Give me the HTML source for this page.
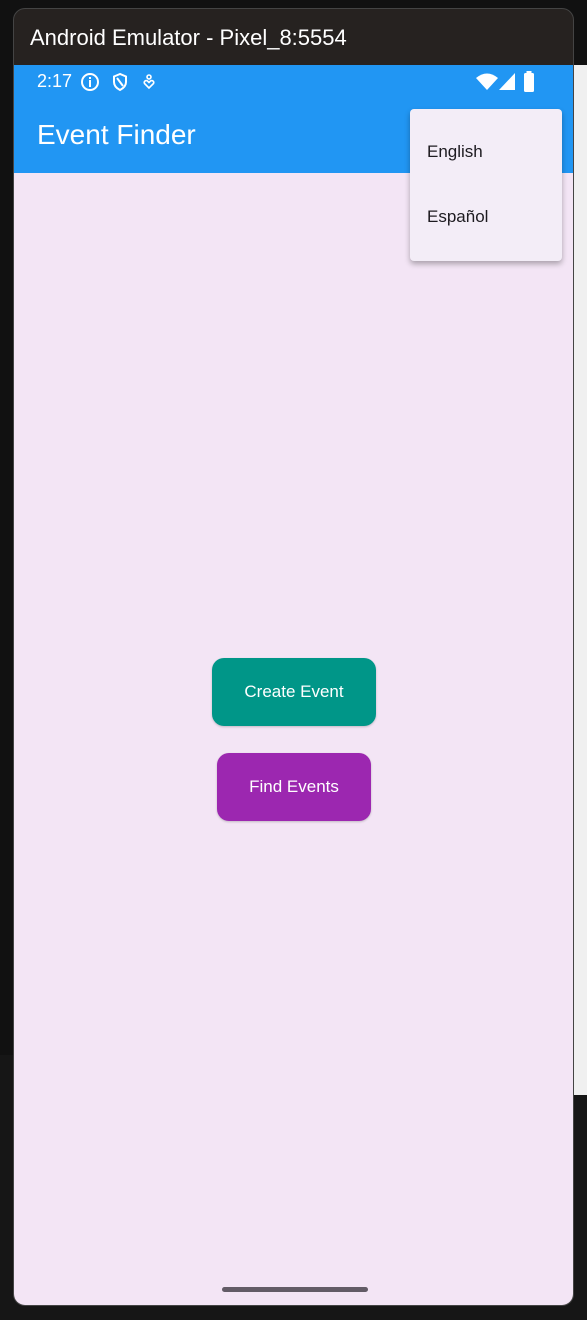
<!DOCTYPE html>
<html><head><style>
*{margin:0;padding:0;box-sizing:border-box}
body{width:587px;height:1320px;background:#111;position:relative;overflow:hidden;font-family:"Liberation Sans",sans-serif}
.lower{position:absolute;left:0;top:1055px;width:587px;height:265px;background:#161616}
.right{position:absolute;left:574px;top:65px;width:13px;height:1030px;background:#f0f0f0}
.win{position:absolute;left:13px;top:8px;width:561px;height:1298px;border-radius:12px;background:#262220;overflow:hidden;border:1px solid #444}
.title{position:absolute;left:16px;top:16px;color:#fff;font-size:22px}
.bar{position:absolute;left:0;top:56px;width:561px;height:108px;background:#2196F3}
.content{position:absolute;left:0;top:164px;width:561px;height:1134px;background:#F3E5F5}
.sb{position:absolute;top:62px;color:#fff;font-size:18px}
.app{position:absolute;left:23px;top:110px;color:#fff;font-size:28px}
.btn{position:absolute;color:#fff;font-size:17px;display:flex;align-items:center;justify-content:center;border-radius:12px;box-shadow:0 1px 2px rgba(0,0,0,.2)}
.menu{position:absolute;left:396px;top:100px;width:152px;height:152px;background:#F3EDF7;border-radius:4px;box-shadow:0 3px 6px rgba(0,0,0,.3)}
.mi{position:absolute;left:17px;font-size:17px;color:#1d1b20}
.home{position:absolute;left:208px;top:1278px;width:146px;height:5px;border-radius:3px;background:#625b66}
</style></head><body>
<div class="lower"></div>
<div class="right"></div>
<div class="win">
<div class="title">Android Emulator - Pixel_8:5554</div>
<div class="bar"></div>
<div class="content"></div>
<div class="sb" style="left:23px">2:17</div>
<svg style="position:absolute;left:66px;top:63px" width="20" height="20" viewBox="0 0 20 20"><circle cx="10" cy="10" r="8" fill="none" stroke="#fff" stroke-width="2"/><rect x="9" y="8" width="2" height="7" fill="#fff"/><rect x="9" y="5" width="2" height="2" fill="#fff"/></svg>
<svg style="position:absolute;left:97px;top:63px" width="18" height="20" viewBox="0 0 18 20"><path d="M9 2L3 4.5V10c0 4 3 6.5 6 8 3-1.5 6-4 6-8V4.5z M6 6l6 8" fill="none" stroke="#fff" stroke-width="2"/></svg>
<svg style="position:absolute;left:128px;top:65px" width="14" height="16" viewBox="0 0 14 16"><circle cx="7" cy="3" r="2" fill="none" stroke="#fff" stroke-width="1.6"/><path d="M7 14L2.5 9.5a2 2 0 0 1 3-2.5L7 8.5 8.5 7a2 2 0 0 1 3 2.5z" fill="none" stroke="#fff" stroke-width="1.6"/></svg>
<svg style="position:absolute;left:462px;top:64px" width="22" height="18" viewBox="0 0 22 18"><path d="M0 5Q11-4 22 5L11 17z" fill="#fff"/></svg>
<svg style="position:absolute;left:485px;top:64px" width="16" height="18" viewBox="0 0 16 18"><path d="M16 0V17H0z" fill="#fff"/></svg>
<svg style="position:absolute;left:509px;top:62px" width="12" height="22" viewBox="0 0 12 22"><rect x="3.5" y="0" width="5" height="3" fill="#fff"/><rect x="1" y="2" width="10" height="19" rx="1.5" fill="#fff"/></svg>
<div class="app">Event Finder</div>
<div class="btn" style="left:198px;top:649px;width:164px;height:68px;background:#009688">Create Event</div>
<div class="btn" style="left:203px;top:744px;width:154px;height:68px;background:#9C27B0">Find Events</div>
<div class="menu"><div class="mi" style="top:33px">English</div><div class="mi" style="top:98px">Español</div></div>
<div class="home"></div>
</div>
</body></html>
